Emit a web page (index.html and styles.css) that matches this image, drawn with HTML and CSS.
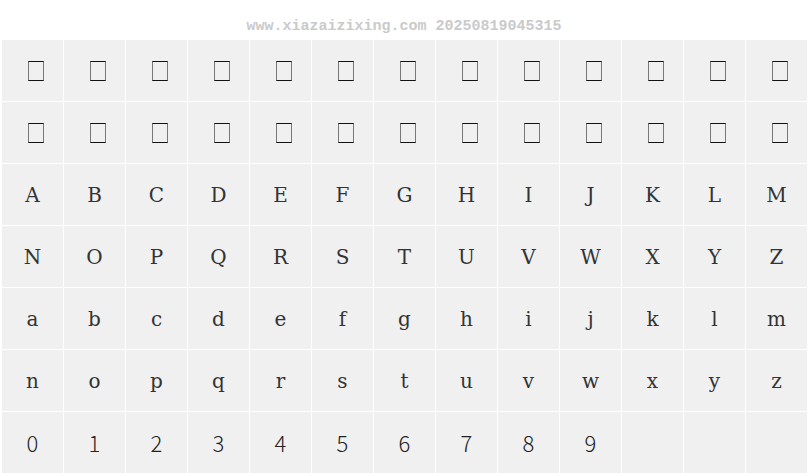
FILE: index.html
```html
<!doctype html>
<html>
  <head>
    <meta charset="UTF-8" />
    <link rel="stylesheet" href="styles.css">
  </head>
  <body>
    <div class="header">www.xiazaizixing.com 20250819045315</div>
    <div class="grid">
      <div class="cell"><span class="tofu"></span></div>
      <div class="cell"><span class="tofu"></span></div>
      <div class="cell"><span class="tofu"></span></div>
      <div class="cell"><span class="tofu"></span></div>
      <div class="cell"><span class="tofu"></span></div>
      <div class="cell"><span class="tofu"></span></div>
      <div class="cell"><span class="tofu"></span></div>
      <div class="cell"><span class="tofu"></span></div>
      <div class="cell"><span class="tofu"></span></div>
      <div class="cell"><span class="tofu"></span></div>
      <div class="cell"><span class="tofu"></span></div>
      <div class="cell"><span class="tofu"></span></div>
      <div class="cell"><span class="tofu"></span></div>
      <div class="cell"><span class="tofu"></span></div>
      <div class="cell"><span class="tofu"></span></div>
      <div class="cell"><span class="tofu"></span></div>
      <div class="cell"><span class="tofu"></span></div>
      <div class="cell"><span class="tofu"></span></div>
      <div class="cell"><span class="tofu"></span></div>
      <div class="cell"><span class="tofu"></span></div>
      <div class="cell"><span class="tofu"></span></div>
      <div class="cell"><span class="tofu"></span></div>
      <div class="cell"><span class="tofu"></span></div>
      <div class="cell"><span class="tofu"></span></div>
      <div class="cell"><span class="tofu"></span></div>
      <div class="cell"><span class="tofu"></span></div>
      <div class="cell">A</div>
      <div class="cell">B</div>
      <div class="cell">C</div>
      <div class="cell">D</div>
      <div class="cell">E</div>
      <div class="cell">F</div>
      <div class="cell">G</div>
      <div class="cell">H</div>
      <div class="cell">I</div>
      <div class="cell">J</div>
      <div class="cell">K</div>
      <div class="cell">L</div>
      <div class="cell">M</div>
      <div class="cell">N</div>
      <div class="cell">O</div>
      <div class="cell">P</div>
      <div class="cell">Q</div>
      <div class="cell">R</div>
      <div class="cell">S</div>
      <div class="cell">T</div>
      <div class="cell">U</div>
      <div class="cell">V</div>
      <div class="cell">W</div>
      <div class="cell">X</div>
      <div class="cell">Y</div>
      <div class="cell">Z</div>
      <div class="cell">a</div>
      <div class="cell">b</div>
      <div class="cell">c</div>
      <div class="cell">d</div>
      <div class="cell">e</div>
      <div class="cell">f</div>
      <div class="cell">g</div>
      <div class="cell">h</div>
      <div class="cell">i</div>
      <div class="cell">j</div>
      <div class="cell">k</div>
      <div class="cell">l</div>
      <div class="cell">m</div>
      <div class="cell">n</div>
      <div class="cell">o</div>
      <div class="cell">p</div>
      <div class="cell">q</div>
      <div class="cell">r</div>
      <div class="cell">s</div>
      <div class="cell">t</div>
      <div class="cell">u</div>
      <div class="cell">v</div>
      <div class="cell">w</div>
      <div class="cell">x</div>
      <div class="cell">y</div>
      <div class="cell">z</div>
      <div class="cell digit">0</div>
      <div class="cell digit">1</div>
      <div class="cell digit">2</div>
      <div class="cell digit">3</div>
      <div class="cell digit">4</div>
      <div class="cell digit">5</div>
      <div class="cell digit">6</div>
      <div class="cell digit">7</div>
      <div class="cell digit">8</div>
      <div class="cell digit">9</div>
      <div class="cell"></div>
      <div class="cell"></div>
      <div class="cell"></div>
    </div>
  </body>
</html>
```

FILE: styles.css
```css
html,
body {
  margin: 0;
  background: #ffffff;
}
.header {
  height: 40px;
  box-sizing: border-box;
  padding-top: 18px;
  font-family: "Liberation Mono", monospace;
  font-size: 15px;
  font-weight: bold;
  line-height: 18px;
  color: #cacaca;
  text-align: center;
}
.grid {
  display: grid;
  grid-template-columns: repeat(13, 61px);
  grid-auto-rows: 61px;
  gap: 1px;
  margin-left: 2px;
}
.cell {
  background: #f0f0f0;
  display: flex;
  align-items: center;
  justify-content: center;
  font-family: "DejaVu Serif", serif;
  font-size: 20px;
  color: #333;
}
.digit {
  font-family: "Noto Sans CJK JP", sans-serif;
  font-weight: 300;
  font-size: 22px;
  color: #222;
  padding-bottom: 2px;
}
.tofu {
  width: 16px;
  height: 20px;
  box-sizing: border-box;
  border-top: 1px solid #111;
  border-bottom: 1px solid #111;
  border-left: 1px solid #777;
  border-right: 1px solid #777;
  margin-left: 7px;
}
```
